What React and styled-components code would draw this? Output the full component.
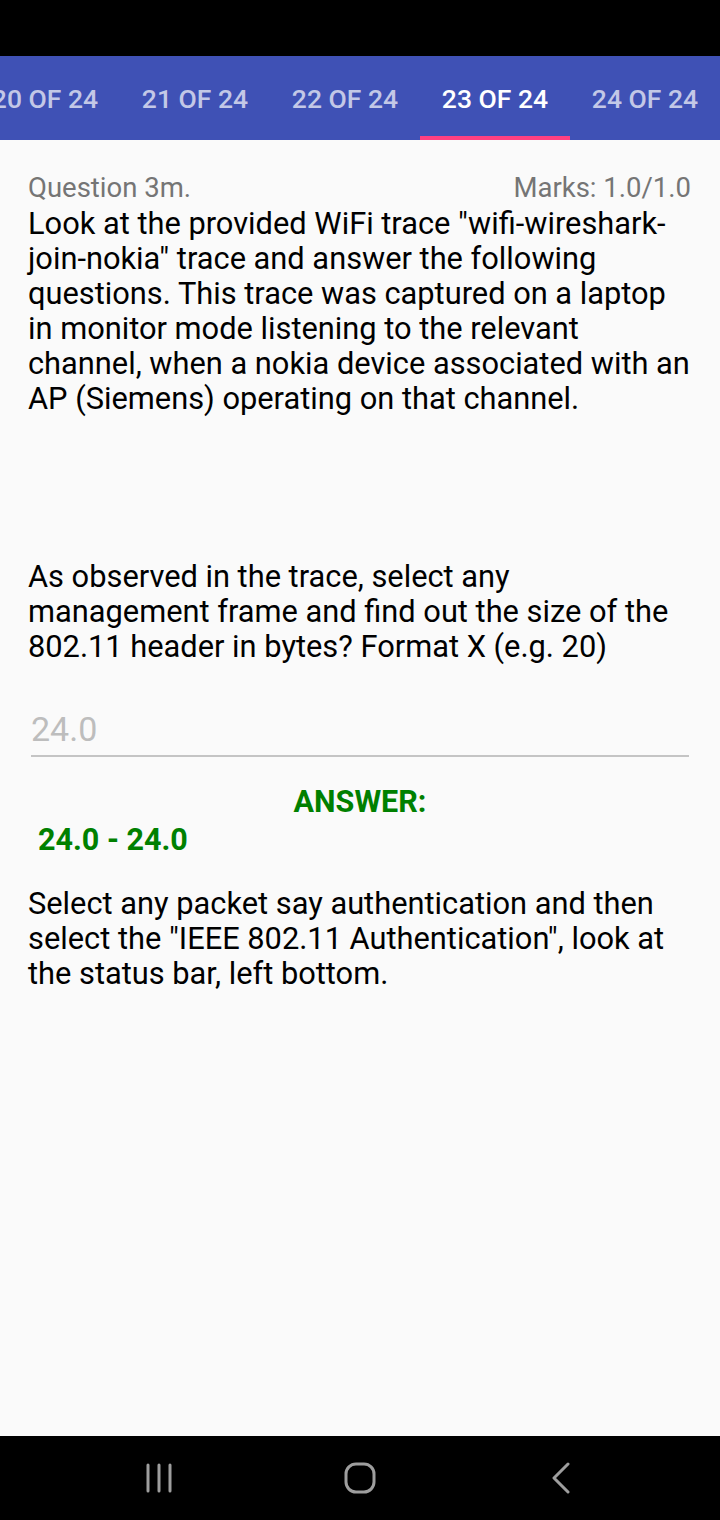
import React from 'react';
import styled, { createGlobalStyle } from 'styled-components';

const GlobalStyle = createGlobalStyle`
  html, body {
    margin: 0;
    padding: 0;
    background: #000;
  }
  body {
    font-family: Roboto, "Liberation Sans", sans-serif;
  }
`;

const Screen = styled.div`
  width: 720px;
  height: 1520px;
  display: flex;
  flex-direction: column;
  background: #fafafa;
  overflow: hidden;
`;

const StatusBar = styled.div`
  height: 56px;
  flex-shrink: 0;
  background: #000;
`;

const TabBar = styled.div`
  height: 84px;
  flex-shrink: 0;
  background: #3f51b5;
  display: flex;
  margin-left: -30px;
`;

const Tab = styled.div`
  width: 150px;
  flex-shrink: 0;
  display: flex;
  align-items: center;
  justify-content: center;
  font-size: 26.5px;
  font-weight: 500;
  color: ${p => (p.active ? '#ffffff' : 'rgba(255,255,255,0.7)')};
  border-bottom: 4px solid ${p => (p.active ? '#ff4081' : 'transparent')};
  padding-top: 4px;
  box-sizing: border-box;
  white-space: nowrap;
`;

const Content = styled.div`
  flex: 1;
  padding: 30px 28px 0 28px;
  display: flex;
  flex-direction: column;
`;

const HeaderRow = styled.div`
  display: flex;
  justify-content: space-between;
  align-items: baseline;
  font-size: 27.5px;
  color: #757575;
  line-height: 36px;
  margin-right: 1px;
`;

const Paragraph = styled.p`
  margin: 0;
  font-size: 30.8px;
  line-height: 35px;
  color: #000;
  margin-top: ${p => p.gap || 0}px;
`;

const InputLine = styled.div`
  margin: 44px 3px 0 3px;
  padding-bottom: 5px;
  border-bottom: 2px solid #c4c4c4;
  font-size: 34px;
  color: #bdbdbd;
  line-height: 42px;
`;

const AnswerTitle = styled.div`
  margin-top: 27px;
  text-align: center;
  font-size: 30.5px;
  font-weight: 700;
  color: #008000;
  line-height: 36px;
`;

const AnswerValue = styled.div`
  margin-left: 10px;
  margin-top: 1px;
  font-size: 30.5px;
  font-weight: 700;
  color: #008000;
  line-height: 38px;
`;

const NavBar = styled.div`
  height: 84px;
  flex-shrink: 0;
  background: #000;
  display: grid;
  grid-template-columns: repeat(3, 1fr);
  align-items: center;
  justify-items: center;
  padding: 0 59px;
`;

const NavIcon = styled.svg`
  display: block;
`;

const tabs = [20, 21, 22, 23, 24];

export default function App() {
  return (
    <>
      <GlobalStyle />
      <Screen>
        <StatusBar />
        <TabBar>
          {tabs.map(n => (
            <Tab key={n} active={n === 23}>{`${n} OF 24`}</Tab>
          ))}
        </TabBar>
        <Content>
          <HeaderRow>
            <span>Question 3m.</span>
            <span>Marks: 1.0/1.0</span>
          </HeaderRow>
          <Paragraph>
            Look at the provided WiFi trace &quot;wifi-wireshark-join-nokia&quot; trace and answer the
            following questions. This trace was captured on a laptop in monitor mode listening to the
            relevant channel, when a nokia device associated with an AP (Siemens) operating on that channel.
          </Paragraph>
          <Paragraph gap={143}>
            As observed in the trace, select any management frame and find out the size of the 802.11
            header in bytes? Format X (e.g. 20)
          </Paragraph>
          <InputLine>24.0</InputLine>
          <AnswerTitle>ANSWER:</AnswerTitle>
          <AnswerValue>24.0 - 24.0</AnswerValue>
          <Paragraph gap={27}>
            Select any packet say authentication and then select the &quot;IEEE 802.11
            Authentication&quot;, look at the status bar, left bottom.
          </Paragraph>
        </Content>
        <NavBar>
          <NavIcon width="28" height="30" viewBox="0 0 28 30">
            <g stroke="#9e9e9e" strokeWidth="3" strokeLinecap="round">
              <line x1="3" y1="2" x2="3" y2="28" />
              <line x1="14" y1="2" x2="14" y2="28" />
              <line x1="25" y1="2" x2="25" y2="28" />
            </g>
          </NavIcon>
          <NavIcon width="32" height="32" viewBox="0 0 32 32">
            <rect x="2" y="2" width="28" height="28" rx="10" fill="none" stroke="#9e9e9e" strokeWidth="3" />
          </NavIcon>
          <NavIcon width="20" height="32" viewBox="0 0 20 32">
            <polyline points="17,2 3,16 17,30" fill="none" stroke="#9e9e9e" strokeWidth="3" strokeLinecap="round" strokeLinejoin="round" />
          </NavIcon>
        </NavBar>
      </Screen>
    </>
  );
}
